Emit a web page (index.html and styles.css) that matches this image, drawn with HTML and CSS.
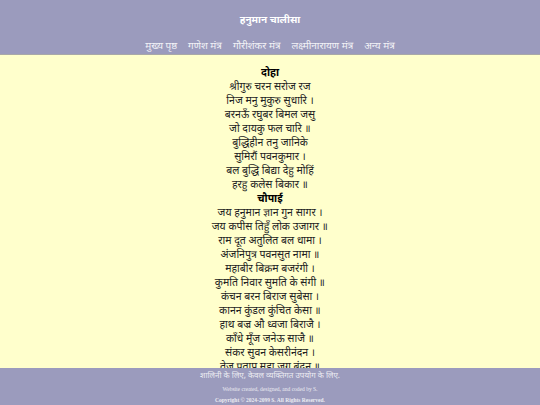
FILE: index.html
```html
<!DOCTYPE html>
<html lang="hi">
<head>
<meta charset="utf-8">
<title>हनुमान चालीसा</title>
<link rel="stylesheet" href="styles.css">
</head>
<body>
<header class="site-header">
  <h1 class="site-title">हनुमान चालीसा</h1>
  <nav class="site-nav">
    <a href="#">मुख्य पृष्ठ</a>
    <a href="#">गणेश मंत्र</a>
    <a href="#">गौरीशंकर मंत्र</a>
    <a href="#">लक्ष्मीनारायण मंत्र</a>
    <a href="#">अन्य मंत्र</a>
  </nav>
</header>
<main class="content">
  <h2 class="section">दोहा</h2>
  <p class="verse">श्रीगुरु चरन सरोज रज<br>
  निज मनु मुकुरु सुधारि ।<br>
  बरनऊँ रघुबर बिमल जसु<br>
  जो दायकु फल चारि ॥<br>
  बुद्धिहीन तनु जानिके<br>
  सुमिरौं पवनकुमार ।<br>
  बल बुद्धि बिद्या देहु मोहिं<br>
  हरहु कलेस बिकार ॥</p>
  <h2 class="section">चौपाई</h2>
  <p class="verse">जय हनुमान ज्ञान गुन सागर ।<br>
  जय कपीस तिहुँ लोक उजागर ॥<br>
  राम दूत अतुलित बल धामा ।<br>
  अंजनिपुत्र पवनसुत नामा ॥<br>
  महाबीर बिक्रम बजरंगी ।<br>
  कुमति निवार सुमति के संगी ॥<br>
  कंचन बरन बिराज सुबेसा ।<br>
  कानन कुंडल कुंचित केसा ॥<br>
  हाथ बज्र औ ध्वजा बिराजै ।<br>
  काँधे मूँज जनेऊ साजै ॥<br>
  संकर सुवन केसरीनंदन ।<br>
  तेज प्रताप महा जग बंदन ॥<br>
  बिद्यावान गुनी अति चातुर ।<br>
  राम काज करिबे को आतुर ॥</p>
</main>
<footer class="site-footer">
  <p class="foot-hindi">शालिनी के लिए, केवल व्यक्तिगत उपयोग के लिए.</p>
  <p class="foot-small">Website created, designed, and coded by S.</p>
  <p class="foot-copy">Copyright © 2024-2099 S. All Rights Reserved.</p>
</footer>
</body>
</html>
```
FILE: styles.css
```css
html, body {
  margin: 0;
  padding: 0;
}
body {
  background: #ffffcc;
  font-family: "Liberation Serif", serif;
  color: #222;
}
.site-header {
  background: #9b9bbd;
  border-bottom: 1px solid #a8a8a8;
  height: 54px;
  display: flex;
  flex-direction: column;
  align-items: center;
  font-family: "Noto Sans Devanagari", sans-serif;
}
.site-title {
  margin: 13px 0 0;
  font-size: 10px;
  line-height: 16px;
  font-weight: bold;
  color: #fff;
}
.site-nav {
  margin-top: 11px;
  display: flex;
  gap: 11px;
  font-size: 10px;
  line-height: 14px;
}
.site-nav a {
  color: #f2f2f6;
  text-decoration: none;
}
.content {
  padding: 12px 0 60px;
  text-align: center;
  font-family: "Noto Sans Devanagari", sans-serif;
  font-size: 10.5px;
  line-height: 14px;
}
.section {
  margin: 0;
  font-size: 10.5px;
  line-height: 14px;
  font-weight: bold;
  color: #000;
}
.verse {
  margin: 0;
  color: #222;
}
.site-footer {
  position: fixed;
  left: 0;
  right: 0;
  bottom: 0;
  height: 37px;
  background: #9b9bbd;
  text-align: center;
  color: #ececf2;
}
.site-footer p {
  margin: 0;
}
.foot-hindi {
  font-family: "Noto Sans Devanagari", sans-serif;
  font-size: 8px;
  line-height: 16px;
}
.foot-small {
  font-size: 5.5px;
  line-height: 11px;
}
.foot-copy {
  font-size: 5.5px;
  line-height: 10px;
  font-weight: bold;
}
```
